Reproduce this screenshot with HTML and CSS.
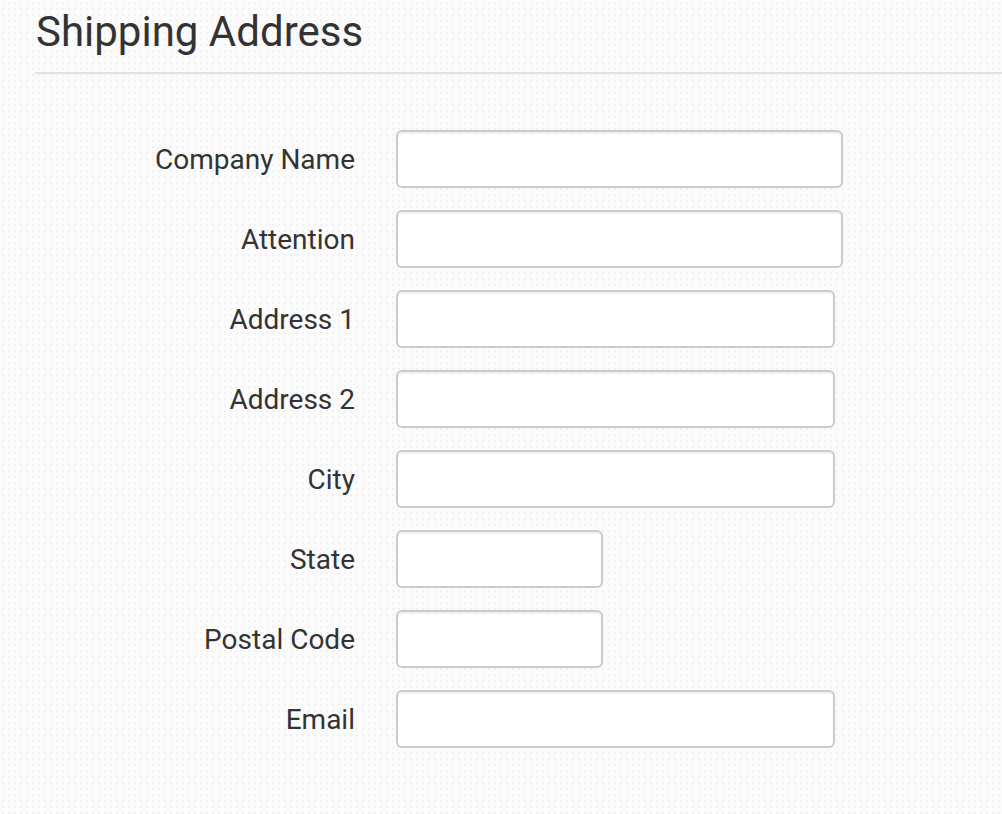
FILE: index.html
```html
<!DOCTYPE html>
<html lang="en">
<head>
<meta charset="utf-8">
<title>Shipping Address</title>
<link rel="stylesheet" href="styles.css">
</head>
<body>
<div class="page">
  <h1 class="title">Shipping Address</h1>
  <form class="form">
    <div class="row"><label class="label" for="company">Company Name</label><input class="field field-wide" id="company" type="text"></div>
    <div class="row"><label class="label" for="attention">Attention</label><input class="field field-wide" id="attention" type="text"></div>
    <div class="row"><label class="label" for="addr1">Address 1</label><input class="field field-mid" id="addr1" type="text"></div>
    <div class="row"><label class="label" for="addr2">Address 2</label><input class="field field-mid" id="addr2" type="text"></div>
    <div class="row"><label class="label" for="city">City</label><input class="field field-mid" id="city" type="text"></div>
    <div class="row"><label class="label" for="state">State</label><input class="field field-short" id="state" type="text"></div>
    <div class="row"><label class="label" for="postal">Postal Code</label><input class="field field-short" id="postal" type="text"></div>
    <div class="row"><label class="label" for="email">Email</label><input class="field field-mid" id="email" type="text"></div>
  </form>
</div>
</body>
</html>
```

FILE: styles.css
```css
html, body {
  margin: 0;
  padding: 0;
}
body {
  width: 1002px;
  height: 814px;
  overflow: hidden;
  font-family: Roboto, "Liberation Sans", sans-serif;
  color: #333;
  background-color: #fbfbfb;
  background-image: radial-gradient(circle, #f1f1f1 1px, transparent 1.6px);
  background-size: 6px 6px;
}
.page {
  padding: 7px 0 0 35px;
}
.title {
  margin: 0;
  padding: 0 0 15px 1px;
  font-size: 42px;
  line-height: 50px;
  font-weight: 400;
  color: #333;
  border-bottom: 2px solid #e2e2e2;
}
.form {
  display: flex;
  flex-direction: column;
  gap: 22px;
  margin-top: 56px;
}
.row {
  display: flex;
  align-items: center;
  gap: 42px;
}
.label {
  width: 320px;
  text-align: right;
  font-size: 28px;
  color: #333;
}
.field {
  box-sizing: border-box;
  height: 58px;
  margin: 0 0 0 -1px;
  padding: 0 12px;
  background: #fff;
  border: 2px solid #cbcbcb;
  border-radius: 6px;
  box-shadow: inset 0 2px 2px rgba(0, 0, 0, 0.06);
  font-family: inherit;
  font-size: 24px;
  outline: none;
}
.field-wide { width: 447px; }
.field-mid { width: 439px; }
.field-short { width: 207px; }
```
